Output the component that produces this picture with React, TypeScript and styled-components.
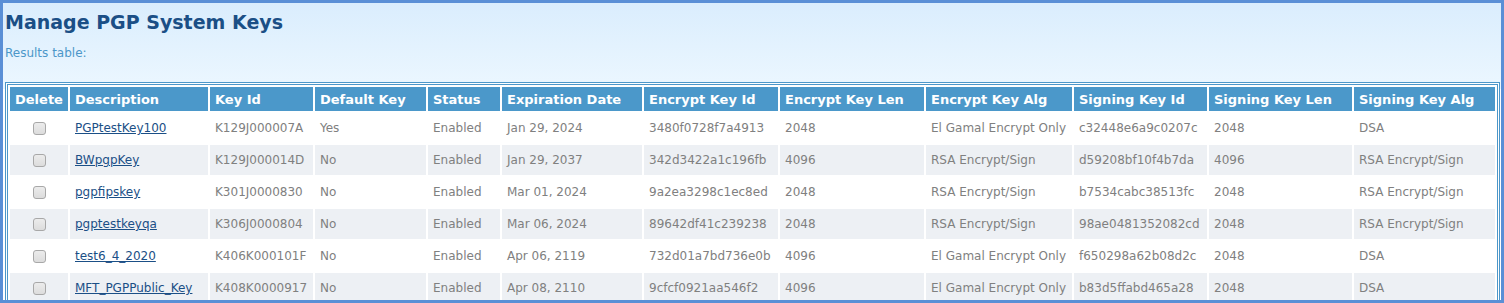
import React from "react";
import styled, { createGlobalStyle } from "styled-components";

const Global = createGlobalStyle`
  html, body { margin: 0; padding: 0; background: #ffffff; }
  body { font-family: "DejaVu Sans", Verdana, sans-serif; }
`;

const Frame = styled.div`
  box-sizing: border-box;
  height: 303px;
  width: 1504px;
  border: 3px solid #5a8fd6;
  background: linear-gradient(#daedfd, #ecf7ff 86px, #ffffff 86px);
  overflow: hidden;
  padding: 0 1px 0 2px;
`;

const Title = styled.h1`
  margin: 0;
  padding: 7px 0 0 0;
  font-size: 19px;
  line-height: 24px;
  font-weight: bold;
  color: #1b4f86;
`;

const Caption = styled.div`
  margin-top: 12px;
  font-size: 12px;
  line-height: 14px;
  color: #4c97c9;
`;

const TableWrap = styled.div`
  margin-top: 22px;
  border: 1px solid #4c97c9;
  padding: 1px;
  background: #fff;
`;

const Table = styled.table`
  width: 100%;
  table-layout: fixed;
  border: 1px solid #4c97c9;
  border-spacing: 2px;
  font-size: 12px;
`;

const Th = styled.th`
  background: #4b98ca;
  color: #ffffff;
  font-weight: bold;
  font-size: 13px;
  text-align: left;
  height: 24px;
  padding: 0 5px;
  white-space: nowrap;
  box-sizing: border-box;
`;

const Tr = styled.tr<{ $alt: boolean }>`
  background: ${(p) => (p.$alt ? "#edf0f4" : "#ffffff")};
`;

const Td = styled.td<{ $center?: boolean }>`
  height: 30px;
  padding: 0 5px;
  color: #808080;
  white-space: nowrap;
  overflow: hidden;
  text-align: ${(p) => (p.$center ? "center" : "left")};
  box-sizing: border-box;
`;

const Link = styled.a`
  color: #1b4f86;
  text-decoration: underline;
  cursor: pointer;
`;

const Check = styled.input`
  appearance: none;
  display: inline-block;
  vertical-align: middle;
  margin: 0;
  width: 13px;
  height: 13px;
  border: 1px solid #a8a8a8;
  border-radius: 3px;
  background: linear-gradient(#ececec, #dcdcdc);
  box-sizing: border-box;
`;

const widths = [58, 138, 103, 111, 72, 140, 134, 144, 146, 133, 143, 141];
const headers = [
  "Delete",
  "Description",
  "Key Id",
  "Default Key",
  "Status",
  "Expiration Date",
  "Encrypt Key Id",
  "Encrypt Key Len",
  "Encrypt Key Alg",
  "Signing Key Id",
  "Signing Key Len",
  "Signing Key Alg",
];

type Row = string[];
const rows: Row[] = [
  ["PGPtestKey100", "K129J000007A", "Yes", "Enabled", "Jan 29, 2024", "3480f0728f7a4913", "2048", "El Gamal Encrypt Only", "c32448e6a9c0207c", "2048", "DSA"],
  ["BWpgpKey", "K129J000014D", "No", "Enabled", "Jan 29, 2037", "342d3422a1c196fb", "4096", "RSA Encrypt/Sign", "d59208bf10f4b7da", "4096", "RSA Encrypt/Sign"],
  ["pgpfipskey", "K301J0000830", "No", "Enabled", "Mar 01, 2024", "9a2ea3298c1ec8ed", "2048", "RSA Encrypt/Sign", "b7534cabc38513fc", "2048", "RSA Encrypt/Sign"],
  ["pgptestkeyqa", "K306J0000804", "No", "Enabled", "Mar 06, 2024", "89642df41c239238", "2048", "RSA Encrypt/Sign", "98ae0481352082cd", "2048", "RSA Encrypt/Sign"],
  ["test6_4_2020", "K406K000101F", "No", "Enabled", "Apr 06, 2119", "732d01a7bd736e0b", "4096", "El Gamal Encrypt Only", "f650298a62b08d2c", "2048", "DSA"],
  ["MFT_PGPPublic_Key", "K408K0000917", "No", "Enabled", "Apr 08, 2110", "9cfcf0921aa546f2", "4096", "El Gamal Encrypt Only", "b83d5ffabd465a28", "2048", "DSA"],
];

export default function App() {
  return (
    <>
      <Global />
      <Frame>
        <Title>Manage PGP System Keys</Title>
        <Caption>Results table:</Caption>
        <TableWrap>
          <Table>
            <colgroup>
              {widths.map((w, i) => (
                <col key={i} style={{ width: w }} />
              ))}
            </colgroup>
            <thead>
              <tr>
                {headers.map((h) => (
                  <Th key={h}>{h}</Th>
                ))}
              </tr>
            </thead>
            <tbody>
              {rows.map((r, i) => (
                <Tr key={r[0]} $alt={i % 2 === 1}>
                  <Td $center>
                    <Check type="checkbox" aria-label={`Delete ${r[0]}`} />
                  </Td>
                  <Td>
                    <Link>{r[0]}</Link>
                  </Td>
                  {r.slice(1).map((c, j) => (
                    <Td key={j}>{c}</Td>
                  ))}
                </Tr>
              ))}
            </tbody>
          </Table>
        </TableWrap>
      </Frame>
    </>
  );
}
